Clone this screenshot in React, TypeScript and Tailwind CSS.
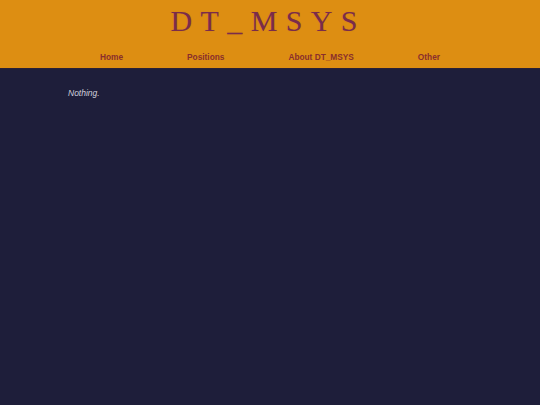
export default function App() {
  return (
    <div className="min-h-[405px] w-full bg-[#1e1e3a]" style={{ fontFamily: '"Liberation Sans", Arial, sans-serif' }}>
      <header className="h-[69px] bg-[#dd8e12] border-b border-[#2a2036] flex flex-col items-center">
        <h1
          className="mt-[4px] text-[30px] leading-[34px] text-[#7a2c4a] tracking-[8.4px] pr-[3.6px]"
          style={{ fontFamily: '"Liberation Serif", "Times New Roman", serif', textShadow: '0 0 1px rgba(160,80,60,0.4)' }}
        >
          DT_MSYS
        </h1>
        <nav className="mt-[13px] flex gap-[64px] text-[8.3px] font-bold text-[#8a2f2c]">
          <span>Home</span>
          <span>Positions</span>
          <span>About DT_MSYS</span>
          <span>Other</span>
        </nav>
      </header>
      <main className="pl-[68px] pt-[18px]">
        <p className="text-[8.5px] italic text-[#cfcfdc]">Nothing.</p>
      </main>
    </div>
  );
}
